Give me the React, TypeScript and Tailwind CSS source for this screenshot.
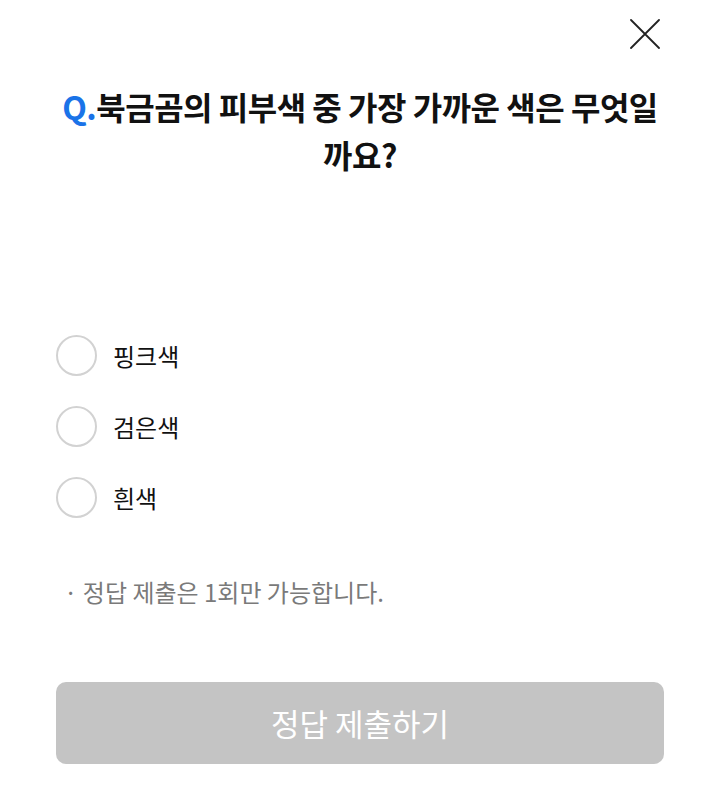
import { useState } from "react";

const OPTIONS = ["핑크색", "검은색", "흰색"];

export default function App() {
  const [picked, setPicked] = useState<number | null>(null);

  return (
    <div
      className="relative h-[790px] w-[720px] bg-white"
      style={{ fontFamily: '"Noto Sans CJK KR", "Noto Sans", sans-serif' }}
    >
      {/* close button */}
      <button className="absolute right-[60px] top-[19px] h-[30px] w-[30px]" aria-label="닫기">
        <svg viewBox="0 0 30 30" className="h-full w-full">
          <path d="M1 1L29 29M29 1L1 29" stroke="#222" strokeWidth="1.8" strokeLinecap="round" />
        </svg>
      </button>

      <div className="flex flex-col px-[56px] pt-[82px]">
        <h1 className="text-center text-[32px] font-bold leading-[48px] tracking-[-0.5px] text-[#111]">
          <span className="text-[#1a73e8]">Q.</span>북금곰의 피부색 중 가장 가까운 색은 무엇일까요?
        </h1>

        <ul className="mt-[157px] flex flex-col gap-[30px]">
          {OPTIONS.map((o, i) => (
            <li key={o}>
              <button className="flex items-center gap-[16px]" onClick={() => setPicked(i)}>
                <span
                  className={
                    "h-[41px] w-[41px] rounded-full border-2 " +
                    (picked === i ? "border-[#1a73e8]" : "border-[#d2d2d2]")
                  }
                />
                <span className="text-[24px] leading-[41px] text-[#111]">{o}</span>
              </button>
            </li>
          ))}
        </ul>

        <p className="mt-[58px] pl-[8px] text-[24px] leading-[32px] text-[#7a7a7a]">
          · 정답 제출은 1회만 가능합니다.
        </p>

        <button className="mt-[74px] h-[82px] w-full rounded-[10px] bg-[#c4c4c4] text-[31px] text-white">
          정답 제출하기
        </button>
      </div>
    </div>
  );
}
